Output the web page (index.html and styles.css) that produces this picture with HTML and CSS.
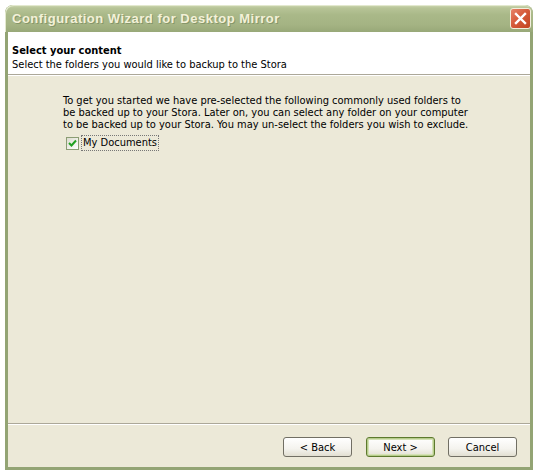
FILE: index.html
```html
<!DOCTYPE html>
<html>
<head>
<meta charset="utf-8">
<link rel="stylesheet" href="styles.css">
</head>
<body>
<div class="window">
  <div class="titlebar">
    <span class="title">Configuration Wizard for Desktop Mirror</span>
    <span class="close">
      <svg width="13" height="13" viewBox="0 0 13 13"><path d="M2 2 L11 11 M11 2 L2 11" stroke="#fff" stroke-width="2.4" stroke-linecap="square"/></svg>
    </span>
  </div>
  <div class="frame">
    <div class="header">
      <div class="h-title">Select your content</div>
      <div class="h-sub">Select the folders you would like to backup to the Stora</div>
    </div>
    <div class="content">
      <p class="intro">To get you started we have pre-selected the following commonly used folders to<br>be backed up to your Stora. Later on, you can select any folder on your computer<br>to be backed up to your Stora. You may un-select the folders you wish to exclude.</p>
      <label class="check">
        <span class="box"><svg width="11" height="11" viewBox="0 0 11 11"><path d="M2 5 L4.5 7.5 L9 2.5" fill="none" stroke="#21a121" stroke-width="2"/></svg></span>
        <span class="label">My Documents</span>
      </label>
    </div>
    <div class="footer">
      <button class="btn back">&lt; Back</button>
      <button class="btn next">Next &gt;</button>
      <button class="btn cancel">Cancel</button>
    </div>
  </div>
</div>
</body>
</html>
```

FILE: styles.css
```css
html, body {
  margin: 0;
  padding: 0;
  background: #ffffff;
}
body {
  font-family: "DejaVu Sans", "Liberation Sans", sans-serif;
  font-stretch: condensed;
  font-size: 11px;
  color: #000;
}
.window {
  margin: 5px 0 0 5px;
  width: 528px;
  height: 465px;
  display: flex;
  flex-direction: column;
  border-radius: 8px 8px 0 0;
  background: #93a474;
  overflow: hidden;
}
.titlebar {
  height: 27px;
  flex: none;
  display: flex;
  align-items: center;
  justify-content: space-between;
  padding: 0 2px 0 7px;
  background: linear-gradient(to bottom, #d0d9b4 0px, #b7c497 3px, #a9b888 10px, #a4b383 20px, #98a878 27px);
  border-radius: 8px 8px 0 0;
  box-shadow: inset 1px 1px 0 #e3e9cf;
}
.title {
  font-family: "Liberation Sans", sans-serif;
  font-stretch: normal;
  font-weight: bold;
  font-size: 13px;
  color: #f3f1d8;
  text-shadow: 1px 1px 0 #86966a;
  letter-spacing: 0.5px;
}
.close {
  width: 19px;
  height: 19px;
  border: 1px solid #f2eedc;
  border-radius: 3px;
  background: linear-gradient(135deg, #e8846a 0%, #d65b3a 45%, #c2441f 100%);
  display: flex;
  align-items: center;
  justify-content: center;
}
.frame {
  flex: 1;
  display: flex;
  flex-direction: column;
  margin: 0 3px 3px 3px;
  background: #ece9d8;
}
.header {
  height: 43px;
  flex: none;
  background: #fff;
  padding: 12px 0 0 4px;
  box-sizing: border-box;
  border-bottom: 1px solid #aca899;
  box-shadow: 0 1px 0 #fff;
}
.h-title {
  font-weight: bold;
  line-height: 13px;
}
.h-sub {
  line-height: 13px;
  margin-top: 1px;
}
.content {
  flex: 1;
  padding: 20px 0 0 55px;
}
.intro {
  margin: 0;
  line-height: 12px;
  white-space: nowrap;
}
.check {
  display: flex;
  align-items: center;
  margin: 5px 0 0 3px;
}
.box {
  width: 11px;
  height: 11px;
  border: 1px solid #8b9d74;
  background: linear-gradient(135deg, #dcdccf, #fff);
  display: flex;
  align-items: center;
  justify-content: center;
}
.label {
  margin-left: 3px;
  padding: 1px 1px;
  outline: 1px dotted #777;
  line-height: 12px;
}
.footer {
  height: 44px;
  flex: none;
  border-top: 1px solid #aca899;
  box-shadow: inset 0 1px 0 #fff;
  display: flex;
  justify-content: flex-end;
  align-items: flex-start;
  padding: 13px 13px 0 0;
  box-sizing: border-box;
  gap: 13px;
}
.btn {
  width: 69px;
  height: 20px;
  font-family: inherit;
  font-size: 11px;
  font-stretch: condensed;
  border: 1px solid #716f64;
  border-radius: 3px;
  background: linear-gradient(to bottom, #ffffff 0%, #f4f3ee 60%, #e2dfd1 100%);
  padding: 0;
  color: #000;
}
.back {
  margin-right: 1px;
}
.next {
  border-color: #5d7a2e;
  box-shadow: inset 0 0 0 1px #b6cc8b, inset 0 0 0 2px #d5e2b6;
}
```
